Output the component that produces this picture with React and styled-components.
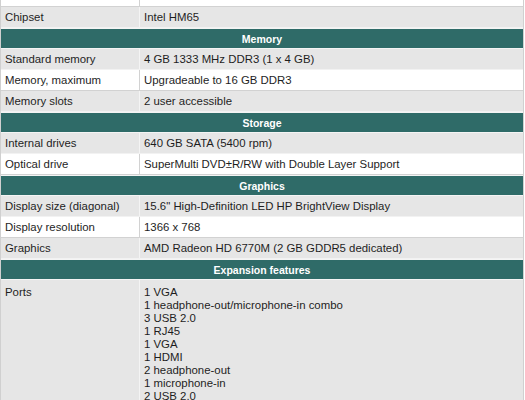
import React from 'react';
import styled, { createGlobalStyle } from 'styled-components';

const GlobalStyle = createGlobalStyle`
  html, body {
    margin: 0;
    padding: 0;
    background: #ffffff;
  }
  body {
    font-family: "Liberation Sans", Arial, Helvetica, sans-serif;
    color: #1e1e1e;
    overflow: hidden;
  }
`;

const SpecTable = styled.div`
  width: 524px;
  box-sizing: border-box;
  border-left: 1px solid #d0d0d0;
  border-right: 1px solid #d0d0d0;
  display: flex;
  flex-direction: column;
`;

const Row = styled.div`
  display: grid;
  grid-template-columns: 138px 1fr;
  box-sizing: border-box;
  height: ${(p) => (p.$tall ? 'auto' : p.$cut ? '7px' : '21px')};
  background: ${(p) => (p.$shade ? '#e6e6e6' : '#ffffff')};
  border-bottom: 1px solid ${(p) => (p.$shade ? '#f2f2f2' : '#d2d2d2')};
  font-size: 11.4px;
`;

const Cell = styled.div`
  display: flex;
  align-items: ${(p) => (p.$top ? 'flex-start' : 'center')};
  padding: ${(p) => (p.$top ? '6px 4px 0 4px' : '0 4px')};
  border-left: ${(p) => (p.$divider ? '1px solid' : 'none')};
  border-color: ${(p) => (p.$shade ? '#f4f4f4' : '#d2d2d2')};
  white-space: nowrap;
`;

const SectionHeader = styled.div`
  box-sizing: border-box;
  height: 21px;
  background: #2f6b68;
  border-top: 1px solid #f4f4f4;
  border-bottom: 1px solid #f4f4f4;
  color: #ffffff;
  font-weight: bold;
  font-size: 10.5px;
  display: flex;
  align-items: center;
  justify-content: center;
`;

const PortList = styled.ul`
  list-style: none;
  margin: 0;
  padding: 0 0 12px 0;
  line-height: 13px;
`;

const sections = [
  {
    title: 'Memory',
    rows: [
      ['Standard memory', '4 GB 1333 MHz DDR3 (1 x 4 GB)'],
      ['Memory, maximum', 'Upgradeable to 16 GB DDR3'],
      ['Memory slots', '2 user accessible'],
    ],
  },
  {
    title: 'Storage',
    rows: [
      ['Internal drives', '640 GB SATA (5400 rpm)'],
      ['Optical drive', 'SuperMulti DVD±R/RW with Double Layer Support'],
    ],
  },
  {
    title: 'Graphics',
    rows: [
      ['Display size (diagonal)', '15.6" High-Definition LED HP BrightView Display'],
      ['Display resolution', '1366 x 768'],
      ['Graphics', 'AMD Radeon HD 6770M (2 GB GDDR5 dedicated)'],
    ],
  },
];

const ports = [
  '1 VGA',
  '1 headphone-out/microphone-in combo',
  '3 USB 2.0',
  '1 RJ45',
  '1 VGA',
  '1 HDMI',
  '2 headphone-out',
  '1 microphone-in',
  '2 USB 2.0',
];

const SpecRow = ({ label, value, shade }) => (
  <Row $shade={shade}>
    <Cell $shade={shade}>{label}</Cell>
    <Cell $shade={shade} $divider>{value}</Cell>
  </Row>
);

const App = () => {
  return (
    <>
      <GlobalStyle />
      <SpecTable>
        <Row $cut>
          <Cell />
          <Cell $divider />
        </Row>
        <SpecRow label="Chipset" value="Intel HM65" shade />

        {sections.map((section) => (
          <React.Fragment key={section.title}>
            <SectionHeader>{section.title}</SectionHeader>
            {section.rows.map(([label, value], i) => (
              <SpecRow key={label} label={label} value={value} shade={i % 2 === 0} />
            ))}
          </React.Fragment>
        ))}

        <SectionHeader>Expansion features</SectionHeader>
        <Row $shade $tall>
          <Cell $shade $top>Ports</Cell>
          <Cell $shade $top $divider>
            <PortList>
              {ports.map((p, i) => (
                <li key={i}>{p}</li>
              ))}
            </PortList>
          </Cell>
        </Row>
      </SpecTable>
    </>
  );
};

export default App;
